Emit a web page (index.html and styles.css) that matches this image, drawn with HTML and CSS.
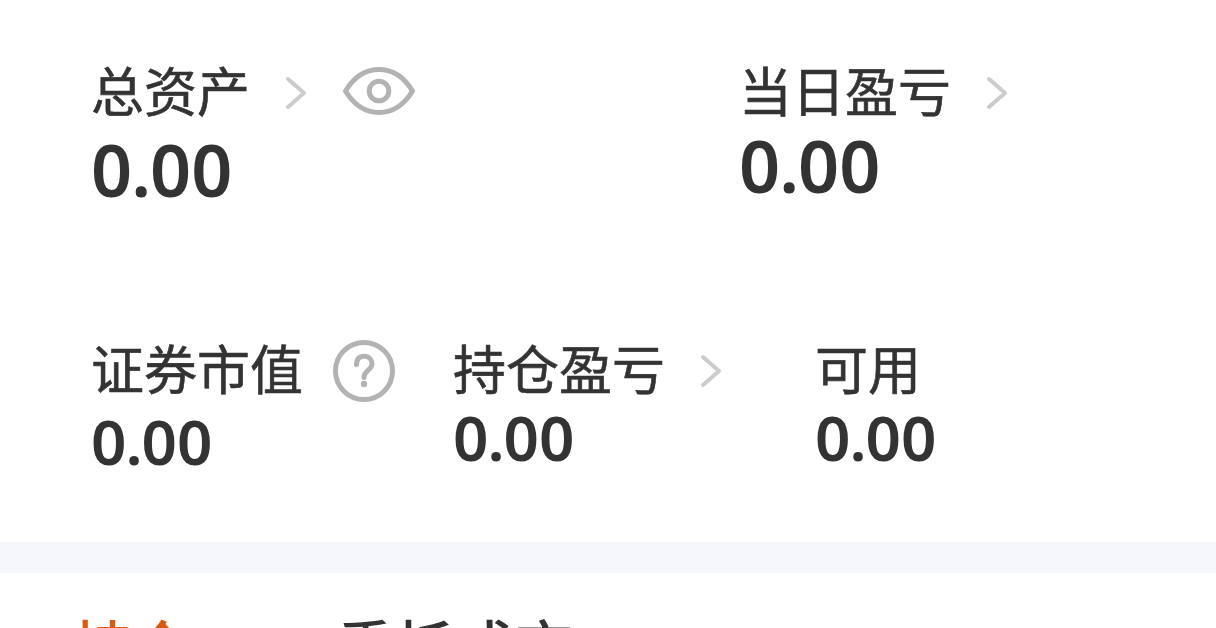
FILE: index.html
```html
<!DOCTYPE html>
<html lang="zh-CN">
<head>
    <meta charset="UTF-8">
    <title>持仓</title>
    <link rel="stylesheet" href="styles.css">
</head>
<body>
<div class="page">
    <!--资产信息-->
    <div class="assets">
        <div class="row total">
            <div class="item">
                <div class="label">
                    <span>总资产</span>
                    <svg class="arrow" width="22" height="34" viewBox="0 0 22 34"><path d="M3 3L19 17L3 31"/></svg>
                    <svg class="eye" width="74" height="50" viewBox="0 0 74 50">
                        <path d="M3.500 25C12 11 23 3.500 37 3.500S62 11 70.500 25C62 39 51 46.500 37 46.500S12 39 3.500 25Z"/>
                        <circle cx="37" cy="25" r="9.800"/>
                    </svg>
                </div>
                <div class="num">0<span class="dot">.</span>00</div>
            </div>
            <div class="item up">
                <div class="label">
                    <span>当日盈亏</span>
                    <svg class="arrow" width="22" height="34" viewBox="0 0 22 34"><path d="M3 3L19 17L3 31"/></svg>
                </div>
                <div class="num">0<span class="dot">.</span>00</div>
            </div>
        </div>
        <div class="row detail">
            <div class="item">
                <div class="label">
                    <span>证券市值</span>
                    <svg class="help" width="62" height="62" viewBox="0 0 62 62">
                        <circle cx="31" cy="31" r="28.500"/>
                        <path d="M23.500 24.500C23.500 19 26.500 16.200 31.200 16.200S39 19.500 39 24C39 30 31 30.500 31 37.500"/>
                        <circle class="point" cx="31" cy="44" r="3.200"/>
                    </svg>
                </div>
                <div class="num">0<span class="dot">.</span>00</div>
            </div>
            <div class="item up">
                <div class="label">
                    <span>持仓盈亏</span>
                    <svg class="arrow" width="22" height="34" viewBox="0 0 22 34"><path d="M3 3L19 17L3 31"/></svg>
                </div>
                <div class="num">0<span class="dot">.</span>00</div>
            </div>
            <div class="item up">
                <div class="label"><span>可用</span></div>
                <div class="num">0<span class="dot">.</span>00</div>
            </div>
        </div>
    </div>
    <!--切换栏-->
    <div class="tabs">
        <span class="current">持仓</span>
        <span>委托成交</span>
    </div>
</div>
</body>
</html>
```

FILE: styles.css
```css
* {
    padding: 0;
    margin: 0;
}

body {
    background: #fff;
    color: #333;
    font-family: "Noto Sans CJK SC", sans-serif;
    overflow: hidden;
}

.page {
    height: 628px;
    overflow: hidden;
}

.assets {
    height: 542px;
    box-sizing: border-box;
    padding: 58px 0 0 91px;
}

.row {
    display: grid;
}

.total {
    grid-template-columns: 648px 1fr;
    height: 278px;
}

.detail {
    grid-template-columns: 362px 362px 1fr;
}

.label {
    display: flex;
    align-items: center;
    height: 68px;
    font-size: 53px;
    line-height: 62px;
    white-space: nowrap;
    -webkit-text-stroke: 0.6px #333;
}

.label span {
    height: 68px;
}

.label svg {
    fill: none;
    stroke: #b3b3b3;
    stroke-width: 5;
    stroke-linecap: round;
    stroke-linejoin: round;
}

.label .arrow {
    margin: 2px 0 0 35px;
    stroke: #ccc;
    stroke-width: 4;
}

.label .eye {
    margin: 0 0 2px 35px;
}

.label .help {
    margin: 2px 0 0 30px;
}

.label .point {
    fill: #b3b3b3;
    stroke: none;
}

.num {
    height: 80px;
    font-family: "Noto Sans", sans-serif;
    font-size: 72px;
    font-weight: 600;
    line-height: 86px;
    white-space: nowrap;
}

.up .num {
    line-height: 78px;
}

.detail .num {
    font-size: 62px;
    line-height: 74px;
}

.detail .up .num {
    line-height: 66px;
}

.dot {
    margin: 0 0 0 -1px;
    letter-spacing: -1px;
}

.tabs {
    display: flex;
    gap: 144px;
    height: 24px;
    padding: 31px 0 0 73px;
    border-top: 31px solid #f6f7fa;
    font-size: 59.5px;
    font-weight: 500;
    line-height: 80px;
    overflow: hidden;
}

.tabs .current {
    color: #d95b13;
}
```
